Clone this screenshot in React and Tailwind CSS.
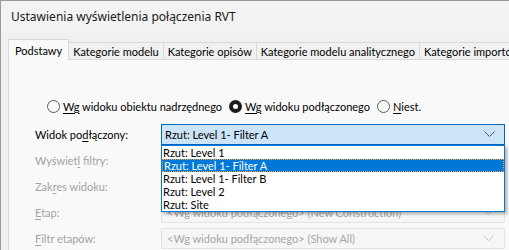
import { useState } from "react";

const Chevron = ({ disabled }) => (
  <svg width="11" height="7" viewBox="0 0 11 7" className="shrink-0">
    <polyline
      points="0.5,0.5 5.5,5.5 10.5,0.5"
      fill="none"
      stroke={disabled ? "#c4c4c4" : "#5c5c5c"}
      strokeWidth="1"
    />
  </svg>
);

const Radio = ({ checked, label, rest }) => (
  <div className="flex items-center gap-[3px]">
    {checked ? (
      <span className="w-[13px] h-[13px] rounded-full bg-[#1b1b1b] flex items-center justify-center">
        <span className="w-[5px] h-[5px] rounded-full bg-white" />
      </span>
    ) : (
      <span className="w-[13px] h-[13px] rounded-full border border-[#5a5a5a] bg-[#fbfbfb]" />
    )}
    <span>
      <span className="underline underline-offset-2">{label}</span>
      {rest}
    </span>
  </div>
);

const Label = ({ pre, key1, post, disabled }) => (
  <div className={`w-[126px] shrink-0 ${disabled ? "text-[#a2a2a2]" : "text-black"}`}>
    {pre}
    <span className="underline underline-offset-2">{key1}</span>
    {post}
  </div>
);

const DisabledCombo = ({ text }) => (
  <div className="flex-1 h-[21px] border border-[#e3e3e3] bg-[#f6f6f6] rounded-[2px] flex items-center justify-between pl-[5px] pr-[10px] text-[#a6a6a6]">
    <span>{text}</span>
    <Chevron disabled />
  </div>
);

const items = [
  "Rzut: Level 1",
  "Rzut: Level 1- Filter A",
  "Rzut: Level 1- Filter B",
  "Rzut: Level 2",
  "Rzut: Site",
];

export default function App() {
  const [selected] = useState(1);
  const tabs = [
    "Kategorie modelu",
    "Kategorie opisów",
    "Kategorie modelu analitycznego",
    "Kategorie importowanych",
  ];

  return (
    <div className="w-[509px] h-[250px] overflow-hidden bg-[#f0f0f0] border-l border-t border-[#9a9a9a] font-['Lato',sans-serif] text-[11px] leading-none text-black">
      <div className="h-[32px] bg-[#f3f3f3] flex items-center pl-[10px] pb-[1px] text-[12px] text-[#1a1a1a] font-['Noto_Sans',sans-serif]">
        Ustawienia wyświetlenia połączenia RVT
      </div>

      <div className="flex items-end pl-[7px] h-[26px] whitespace-nowrap">
        <div className="h-[21px] px-[6px] flex items-center bg-[#f9f9f9] border border-b-0 border-[#d9d9d9] relative top-[1px] z-10">
          Podstawy
        </div>
        {tabs.map((t) => (
          <div
            key={t}
            className="h-[17px] px-[4px] flex items-center bg-[#f0f0f0] border border-l-0 border-b-0 border-[#d9d9d9]"
          >
            {t}
          </div>
        ))}
      </div>

      <div className="ml-[7px] h-[200px] bg-[#f9f9f9] border-l border-t border-[#d9d9d9] pt-[38px] whitespace-nowrap">
        <div className="flex items-center h-[16px] pl-[38px] gap-[7px]">
          <Radio label="Wg" rest=" widoku obiektu nadrzędnego" />
          <Radio checked label="Wg" rest=" widoku podłączonego" />
          <Radio label="N" rest="iest." />
        </div>

        <div className="flex flex-col gap-[5px] mt-[10px] pl-[26px] pr-[4px]">
          <div className="flex items-center">
            <Label pre="Widok po" key1="d" post="łączony:" />
            <div className="flex-1 relative">
              <div className="h-[21px] border border-[#0067c0] bg-[#cce4f7] flex items-center justify-between pl-[3px] pr-[9px]">
                <span>{items[selected]}</span>
                <Chevron />
              </div>
              <div className="absolute left-0 right-0 top-[21px] z-20 border border-[#0078d7] bg-white shadow-[2px_2px_3px_rgba(0,0,0,0.3)]">
                {items.map((it, i) => (
                  <div
                    key={it}
                    className={`h-[13px] flex items-center pl-[1px] ${
                      i === selected
                        ? "bg-[#0078d7] text-white border border-dotted border-[#f5a145]"
                        : ""
                    }`}
                  >
                    {it}
                  </div>
                ))}
              </div>
            </div>
          </div>
          <div className="flex items-center">
            <Label disabled pre="Wyświet" key1="l" post=" filtry:" />
            <DisabledCombo text="" />
          </div>
          <div className="flex items-center">
            <Label disabled pre="Zak" key1="r" post="es widoku:" />
            <DisabledCombo text="" />
          </div>
          <div className="flex items-center">
            <Label disabled pre="" key1="E" post="tap:" />
            <DisabledCombo text="<Wg widoku podłączonego> (New Construction)" />
          </div>
          <div className="flex items-center">
            <Label disabled pre="" key1="F" post="iltr etapów:" />
            <DisabledCombo text="<Wg widoku podłączonego> (Show All)" />
          </div>
        </div>
      </div>
    </div>
  );
}
